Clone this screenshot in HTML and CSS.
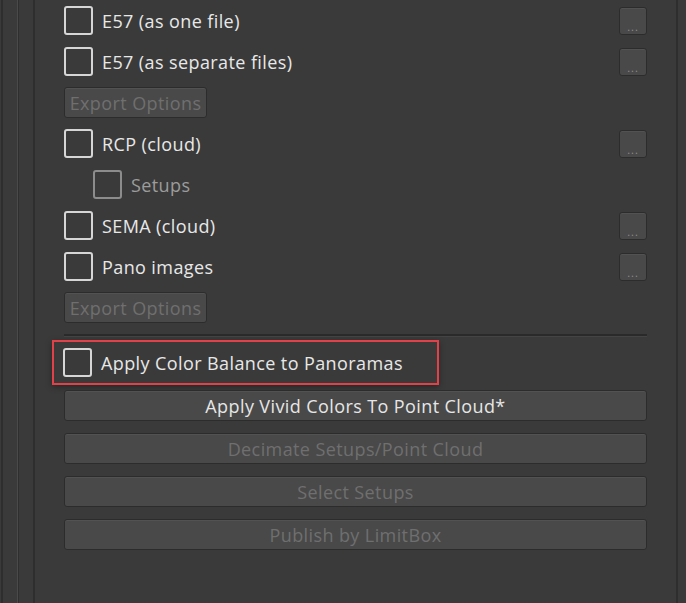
FILE: index.html
```html
<!DOCTYPE html>
<html lang="en">
  <head>
    <meta charset="UTF-8" />
    <meta name="viewport" content="width=device-width, initial-scale=1.0" />
    <title>Export</title>
    <link rel="stylesheet" href="styles.css">
  </head>
  <body>
    <div class="rail"></div>
    <div class="panel">
      <div class="row">
        <label class="check"><span class="box"></span>E57 (as one file)</label>
        <button class="more">...</button>
      </div>
      <div class="row">
        <label class="check"><span class="box"></span>E57 (as separate files)</label>
        <button class="more">...</button>
      </div>
      <div class="row">
        <button class="small-btn" disabled>Export Options</button>
      </div>
      <div class="row">
        <label class="check"><span class="box"></span>RCP (cloud)</label>
        <button class="more">...</button>
      </div>
      <div class="row sub">
        <label class="check muted"><span class="box"></span>Setups</label>
      </div>
      <div class="row">
        <label class="check"><span class="box"></span>SEMA (cloud)</label>
        <button class="more">...</button>
      </div>
      <div class="row">
        <label class="check"><span class="box"></span>Pano images</label>
        <button class="more">...</button>
      </div>
      <div class="row">
        <button class="small-btn" disabled>Export Options</button>
      </div>

      <div class="separator"></div>

      <div class="highlight">
        <label class="check"><span class="box"></span>Apply Color Balance to Panoramas</label>
      </div>

      <div class="actions">
        <button class="wide-btn">Apply Vivid Colors To Point Cloud*</button>
        <button class="wide-btn" disabled>Decimate Setups/Point Cloud</button>
        <button class="wide-btn" disabled>Select Setups</button>
        <button class="wide-btn" disabled>Publish by LimitBox</button>
      </div>
    </div>
  </body>
</html>
```

FILE: styles.css
```css
body {
  margin: 0;
  height: 603px;
  overflow: hidden;
  background: #3a3a3a;
  font-family: "Open Sans", "Noto Sans", sans-serif;
  font-size: 18px;
  letter-spacing: 0.4px;
  color: #e8e8e8;
  display: flex;
}

/* nested frame edges on the left */
.rail {
  width: 35px;
  flex-shrink: 0;
  background: linear-gradient(to right,
    #3a3a3a 0, #3a3a3a 1px,
    #2e2e2e 1px, #2e2e2e 3px,
    #3a3a3a 3px, #3a3a3a 17px,
    #4a4a4a 17px, #4a4a4a 18px,
    #2f2f2f 18px, #2f2f2f 19px,
    #3a3a3a 19px, #3a3a3a 33px,
    #2e2e2e 33px, #2e2e2e 35px);
}

.panel {
  width: 643px;
  padding: 0 29px;
  box-sizing: border-box;
  border-right: 2px solid #2e2e2e;
  flex-shrink: 0;
}

.row {
  height: 41px;
  display: flex;
  align-items: center;
  justify-content: space-between;
}

.row.sub {
  padding-left: 29px;
}

.check {
  display: flex;
  align-items: center;
  gap: 9px;
}

.box {
  width: 25px;
  height: 25px;
  border: 2px solid #d6d6d6;
  border-radius: 3px;
}

.check.muted {
  color: #9c9c9c;
}

.check.muted .box {
  border-color: #8c8c8c;
}

button {
  font-family: inherit;
  letter-spacing: inherit;
  background: #494949;
  border: 1px solid #2c2c2c;
  border-radius: 3px;
  box-shadow: inset 0 1px 0 #525252;
  color: #e6e6e6;
  padding: 0;
}

button:disabled {
  color: #6f6f6f;
}

.more {
  width: 28px;
  height: 28px;
  font-size: 11px;
  line-height: 1;
  color: #8c8c8c;
  padding-top: 12px;
  letter-spacing: 1px;
}

.small-btn {
  width: 143px;
  height: 31px;
  font-size: 18px;
}

.separator {
  height: 2px;
  margin-top: 6px;
  background: #2a2a2a;
  border-bottom: 1px solid #444;
}

.highlight {
  display: inline-flex;
  margin: 3px 0 0 -12px;
  padding: 6px 34px 6px 9px;
  border: 2px solid #e3414a;
  box-shadow: 0 2px 6px rgba(0, 0, 0, 0.35);
}

.actions {
  display: flex;
  flex-direction: column;
  gap: 12px;
  margin-top: 5px;
}

.wide-btn {
  height: 31px;
  font-size: 18px;
}
```
